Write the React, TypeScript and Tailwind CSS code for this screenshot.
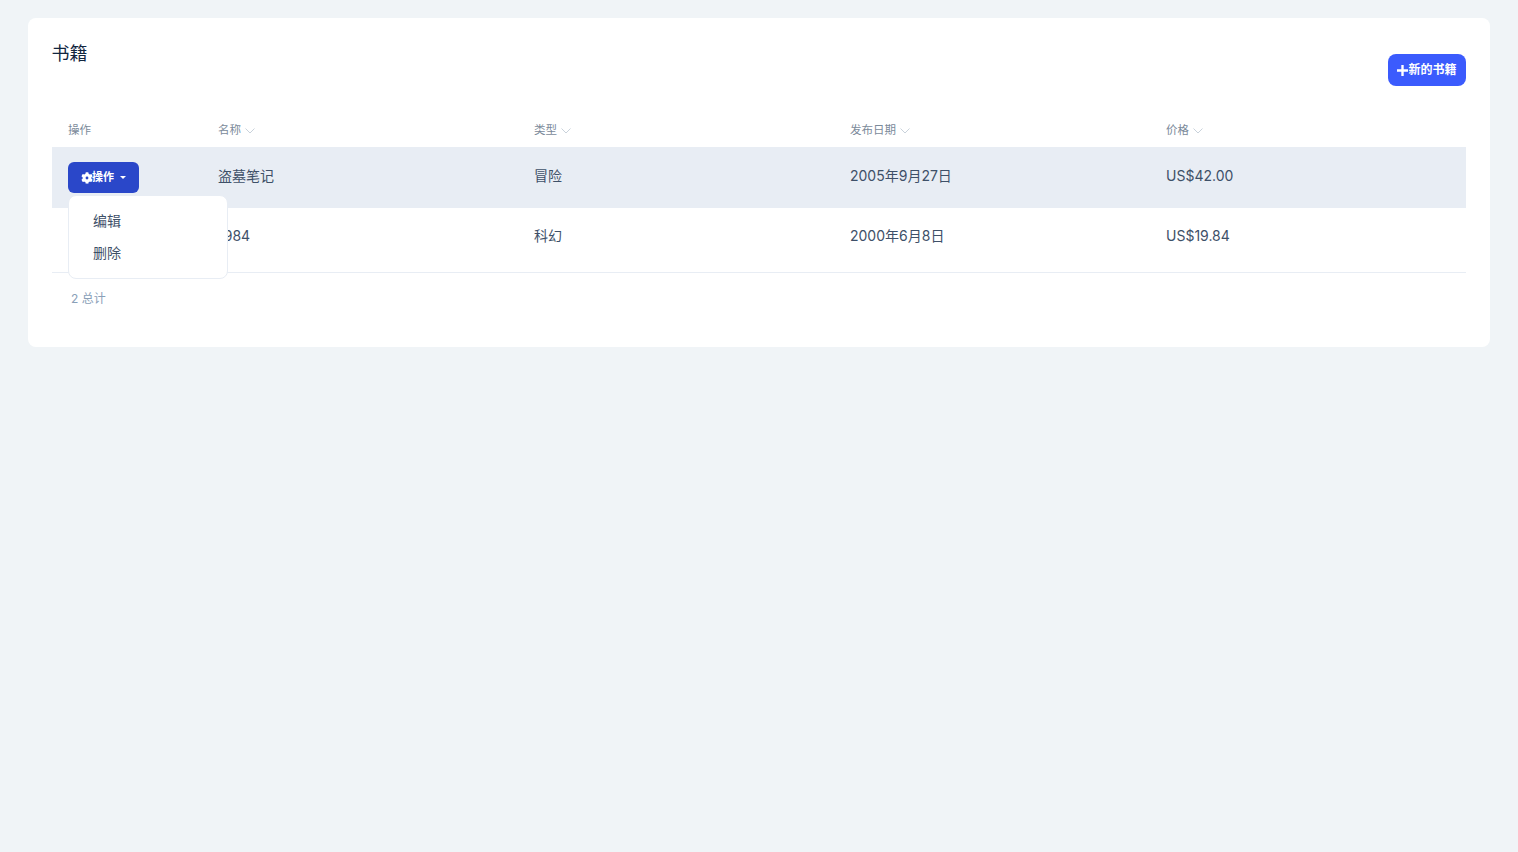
const font = "font-['Inter','Noto_Sans_CJK_SC',sans-serif]";

const books = [
  { name: "盗墓笔记", type: "冒险", date: "2005年9月27日", price: "US$42.00" },
  { name: "1984", type: "科幻", date: "2000年6月8日", price: "US$19.84" },
];

const Gear = () => (
  <svg viewBox="0 0 512 512" className="w-3 h-3" fill="currentColor">
    <path d="M487 315l-42-24c4-23 4-47 0-70l42-24c5-3 7-9 5-14-11-35-30-67-54-93-4-4-10-5-15-2l-42 24c-18-15-38-27-60-35V29c0-6-4-10-9-12-37-8-74-8-109 0-5 2-9 6-9 12v48c-22 8-42 20-60 35L92 88c-5-3-11-2-15 2-24 26-43 58-54 93-2 5 0 11 5 14l42 24c-4 23-4 47 0 70l-42 24c-5 3-7 9-5 14 11 35 30 67 54 93 4 4 10 5 15 2l42-24c18 15 38 27 60 35v48c0 6 4 10 9 12 37 8 74 8 109 0 5-2 9-6 9-12v-48c22-8 42-20 60-35l42 24c5 3 11 2 15-2 24-26 43-58 54-93 2-5 0-11-5-14zM256 316a60 60 0 1 1 0-120 60 60 0 0 1 0 120z" />
  </svg>
);

const SortArrow = () => (
  <svg viewBox="0 0 10 6" className="ml-1 w-[10px] h-[6px] text-[#c9d2db]" fill="none" stroke="currentColor" strokeWidth="1">
    <path d="M0.5 0.5L5 5L9.5 0.5" />
  </svg>
);

const PlusIcon = () => (
  <svg viewBox="0 0 12 12" className="w-[11px] h-[11px]" fill="none" stroke="currentColor" strokeWidth="2.6">
    <path d="M0 6H12M6 0V12" />
  </svg>
);

const ActionButton = () => (
  <button className="flex items-center w-[71px] h-[31px] pl-[13px] rounded-md bg-[#2a47c9] text-white text-[11px] font-bold">
    <Gear />
    <span className="-ml-px -mt-px">操作</span>
    <span className="ml-[6px] w-0 h-0 border-x-[3px] border-x-transparent border-t-[3px] border-t-white" />
  </button>
);

const HeaderCell = ({ label, sort = true }: { label: string; sort?: boolean }) => (
  <div className="flex items-center px-4 text-[11.5px] text-[#7b8a9a]">
    <span>{label}</span>
    {sort && <SortArrow />}
  </div>
);

export default function App() {
  return (
    <div className={`${font} min-h-[852px] bg-[#f0f4f7] px-7 pt-[18px]`}>
      <div className="bg-white rounded-lg h-[329px] px-6 pt-6">
        <div className="flex justify-between h-[76px]">
          <h1 className="text-[18px] leading-[21px] text-[#12263f] -ml-[0.5px] mt-px">书籍</h1>
          <button className="flex items-center justify-center mt-3 w-[78px] h-8 rounded-lg bg-[#3b5bfd] text-white text-[12px] font-bold">
            <PlusIcon />
            新的书籍
          </button>
        </div>

        <div className="relative">
          <div className="grid grid-cols-[150px_316px_316px_316px_316px] h-[29px] pb-[3px]">
            <HeaderCell label="操作" sort={false} />
            <HeaderCell label="名称" />
            <HeaderCell label="类型" />
            <HeaderCell label="发布日期" />
            <HeaderCell label="价格" />
          </div>

          {books.map((book, i) => (
            <div
              key={book.name}
              className={
                i === 0
                  ? "grid grid-cols-[150px_316px_316px_316px_316px] items-center h-[61px] pb-1 bg-[#e8edf4] text-[14px] text-[#3e5068]"
                  : "grid grid-cols-[150px_316px_316px_316px_316px] items-center h-[65px] pb-[9px] border-b border-[#e8edf4] text-[14px] text-[#3e5068]"
              }
            >
              <div className="px-4 mt-1">
                <ActionButton />
              </div>
              <div className="px-4">{book.name}</div>
              <div className="px-4">{book.type}</div>
              <div className="px-4">{book.date}</div>
              <div className="px-4">{book.price}</div>
            </div>
          ))}

          <div className="absolute left-4 top-[77px] w-40 h-[84px] rounded-lg bg-white border border-[#e8edf4] pt-2 text-[14px] text-[#3e5068]">
            <div className="h-[33px] leading-[33px] pl-6">编辑</div>
            <div className="h-[33px] leading-[32px] pl-6">删除</div>
          </div>
        </div>

        <div className="pl-[19px] pt-[18px] text-[12px] leading-4 text-[#8aa0b8]">2 总计</div>
      </div>
    </div>
  );
}
